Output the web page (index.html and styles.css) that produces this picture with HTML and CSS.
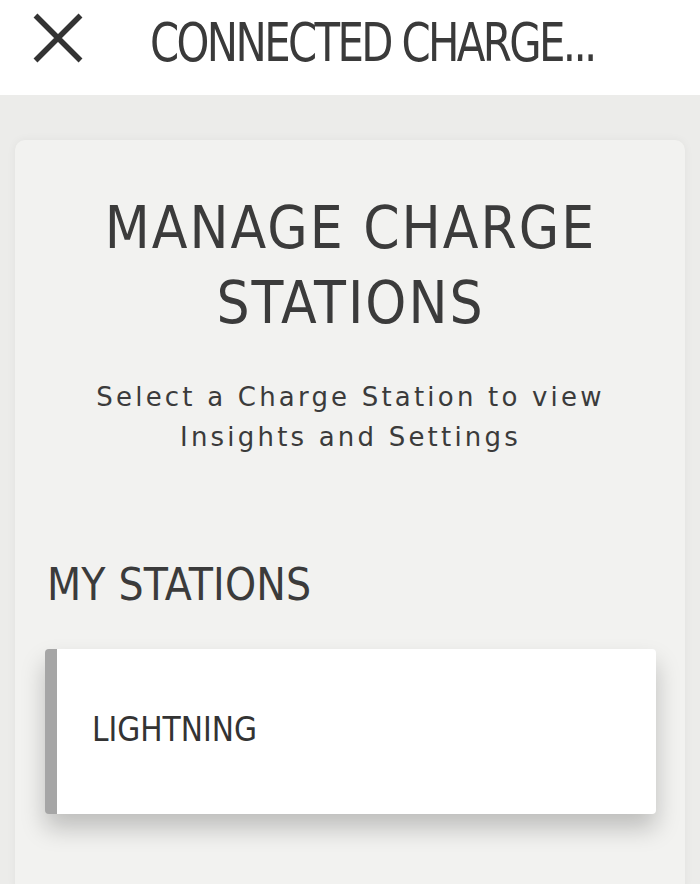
FILE: index.html
```html
<!DOCTYPE html>
<html lang="en">
<head>
<meta charset="utf-8">
<title>Connected Charge Station</title>
<link rel="stylesheet" href="styles.css">
</head>
<body>
<header class="topbar">
  <button class="close" aria-label="Close">
    <svg width="50" height="50" viewBox="0 0 50 50" aria-hidden="true">
      <path d="M2.5 2.5 L47.5 47.5 M47.5 2.5 L2.5 47.5" stroke="#333333" stroke-width="5.5" stroke-linecap="butt" fill="none"/>
    </svg>
  </button>
  <h1 class="topbar-title">CONNECTED CHARGE...</h1>
</header>
<main class="page">
  <section class="panel">
    <h2 class="panel-title">MANAGE CHARGE<br>STATIONS</h2>
    <p class="panel-sub">Select a Charge Station to view<br>Insights and Settings</p>
    <h3 class="section-title">MY STATIONS</h3>
    <div class="station-card">
      <span class="station-name">LIGHTNING</span>
    </div>
  </section>
</main>
</body>
</html>
```
FILE: styles.css
```css
html, body {
  margin: 0;
  padding: 0;
}
body {
  background: #ececea;
  color: #3b3b3b;
  font-family: "DejaVu Sans Condensed", "DejaVu Sans", sans-serif;
  width: 700px;
  height: 884px;
  overflow: hidden;
}
.topbar {
  height: 95px;
  background: #ffffff;
  display: flex;
  align-items: center;
  box-sizing: border-box;
  padding-left: 33px;
}
.close {
  border: 0;
  background: none;
  padding: 0;
  width: 50px;
  height: 50px;
  margin-top: -19px;
  display: block;
}
.close svg {
  display: block;
}
.topbar-title {
  margin: -10px 0 0 67px;
  font-family: "DejaVu Sans Condensed", sans-serif;
  font-weight: normal;
  font-size: 53px;
  line-height: 60px;
  letter-spacing: -3px;
  color: #3a3a3a;
  white-space: nowrap;
  transform: scaleX(0.877);
  transform-origin: left center;
}
.page {
  padding: 45px 15px 0 15px;
}
.panel {
  background: #f2f2f0;
  border-radius: 10px;
  box-shadow: 0 0 10px rgba(0, 0, 0, 0.05);
  padding: 51px 29px 80px 30px;
  min-height: 735px;
  box-sizing: border-box;
}
.panel-title {
  margin: 0;
  text-align: center;
  font-weight: normal;
  font-size: 58px;
  line-height: 75px;
  letter-spacing: 2px;
  color: #3b3b3b;
}
.panel-sub {
  margin: 36px 0 0 0;
  text-align: center;
  font-family: "DejaVu Sans", sans-serif;
  font-size: 26px;
  line-height: 40px;
  letter-spacing: 3.2px;
  color: #3b3b3b;
}
.section-title {
  margin: 102px 0 0 2px;
  font-weight: normal;
  font-size: 44px;
  line-height: 52px;
  letter-spacing: 0.2px;
  color: #3b3b3b;
}
.station-card {
  margin-top: 38px;
  height: 165px;
  background: #ffffff;
  border-left: 12px solid #a6a6a6;
  border-radius: 4px;
  box-sizing: border-box;
  display: flex;
  align-items: center;
  padding-left: 35px;
  box-shadow: 0 14px 24px rgba(0, 0, 0, 0.22);
}
.station-name {
  font-size: 33px;
  letter-spacing: 0;
  color: #333333;
  margin-top: -4px;
}
```
